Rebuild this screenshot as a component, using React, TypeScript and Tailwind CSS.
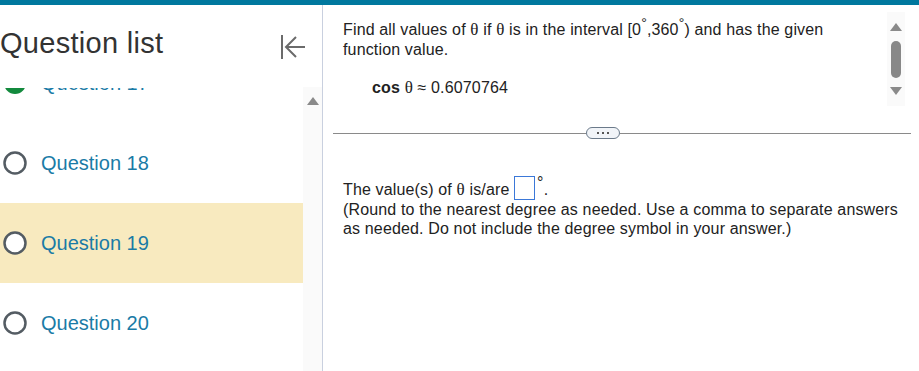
import React from "react";

const Theta = () => <span className="font-['Liberation_Serif',serif] text-[17px]">θ</span>;

const Collapse = () => (
  <svg width="26" height="26" viewBox="0 0 26 26" fill="none" stroke="#6b6b6b" strokeWidth="2">
    <line x1="2" y1="1" x2="2" y2="25" />
    <line x1="6" y1="13" x2="25" y2="13" />
    <polyline points="16,3 6,13 16,23" />
  </svg>
);

const Circle = () => (
  <svg width="24" height="24" viewBox="0 0 24 24">
    <circle cx="12" cy="12" r="10.5" fill="white" stroke="#545c63" strokeWidth="2.5" />
  </svg>
);

const Done = () => (
  <svg width="24" height="24" viewBox="0 0 24 24">
    <circle cx="12" cy="12" r="11" fill="#138a3d" />
    <polyline points="7,12 10.5,15.5 17,8.5" fill="none" stroke="white" strokeWidth="2.2" />
  </svg>
);

const Row = ({ n, active, done }: { n: number; active?: boolean; done?: boolean }) => (
  <div className={`h-[80px] flex items-center gap-[14px] pl-[3px] ${active ? "bg-[#f8eabf]" : ""}`}>
    {done ? <Done /> : <Circle />}
    <span className="text-[20px] text-[#1a7ba6]">Question {n}</span>
  </div>
);

const Up = () => (
  <div className="w-0 h-0 border-l-[6px] border-r-[6px] border-b-[8px] border-l-transparent border-r-transparent border-b-[#8a8a8a]" />
);
const Down = () => (
  <div className="w-0 h-0 border-l-[6px] border-r-[6px] border-t-[8px] border-l-transparent border-r-transparent border-t-[#8a8a8a]" />
);

export default function App() {
  return (
    <div className="w-[919px] h-[371px] flex flex-col overflow-hidden bg-white text-[#222] font-['Liberation_Sans',Arial,sans-serif]">
      <div className="h-[5px] bg-[#00789e]" />
      <div className="flex flex-1 min-h-0">
        <aside className="w-[323px] flex flex-col border-r border-[#c9d0df]">
          <div className="h-[83px] flex items-center justify-between pr-[16px]">
            <h1 className="text-[29px] tracking-[0.3px] text-[#333] -mt-[5px]">Question list</h1>
            <Collapse />
          </div>
          <div className="flex flex-1 min-h-0">
            <div className="flex-1 overflow-hidden">
              <div className="-mt-[45px]">
                <Row n={17} done />
                <Row n={18} />
                <Row n={19} active />
                <Row n={20} />
              </div>
            </div>
            <div className="w-[19px] -mt-[1px] bg-[#fafafa] flex justify-center pt-[10px]">
              <Up />
            </div>
          </div>
        </aside>
        <main className="flex-1 flex flex-col text-[16px] tracking-[0.15px] leading-[20px]">
          <div className="flex">
            <div className="flex-1 pl-[20px] pt-[15px] pr-[10px]">
              <p>
                Find all values of <Theta /> if <Theta /> is in the interval [0<sup className="text-[14px]">°</sup>,360<sup className="text-[14px]">°</sup>) and has the given function value.
              </p>
              <p className="pl-[29px] mt-[18px]">
                <b>cos</b> <Theta /> ≈ 0.6070764
              </p>
            </div>
            <div className="w-[18px] h-[94px] mt-[7px] mr-[14px] bg-[#fafafa] flex flex-col items-center justify-between py-[11px]">
              <Up />
              <div className="w-[10px] h-[37px] rounded-full bg-[#888]" />
              <Down />
            </div>
          </div>
          <div className="flex items-center mt-[21px] ml-[10px] mr-[8px]">
            <div className="w-[253px] h-px bg-[#8a8a8a]" />
            <div className="w-[34px] h-[12px] rounded-full border border-[#6b7a8a] bg-[#f1f4f8] flex items-center justify-center gap-[3px]">
              <span className="w-[2px] h-[2px] bg-[#555]" />
              <span className="w-[2px] h-[2px] bg-[#555]" />
              <span className="w-[2px] h-[2px] bg-[#555]" />
            </div>
            <div className="flex-1 h-px bg-[#8a8a8a]" />
          </div>
          <div className="pl-[20px] pr-[16px] mt-[37px]">
            <p className="flex items-end">
              The value(s) of&nbsp;<Theta />&nbsp;is/are&nbsp;
              <span className="inline-block w-[21px] h-[24px] border border-[#3b78d8]" />
              <span className="self-start text-[16px] leading-[14px] ml-[2px]">°</span>.
            </p>
            <p className="leading-[19px]">
              (Round to the nearest degree as needed. Use a comma to separate answers as needed. Do not include the degree symbol in your answer.)
            </p>
          </div>
        </main>
      </div>
    </div>
  );
}
